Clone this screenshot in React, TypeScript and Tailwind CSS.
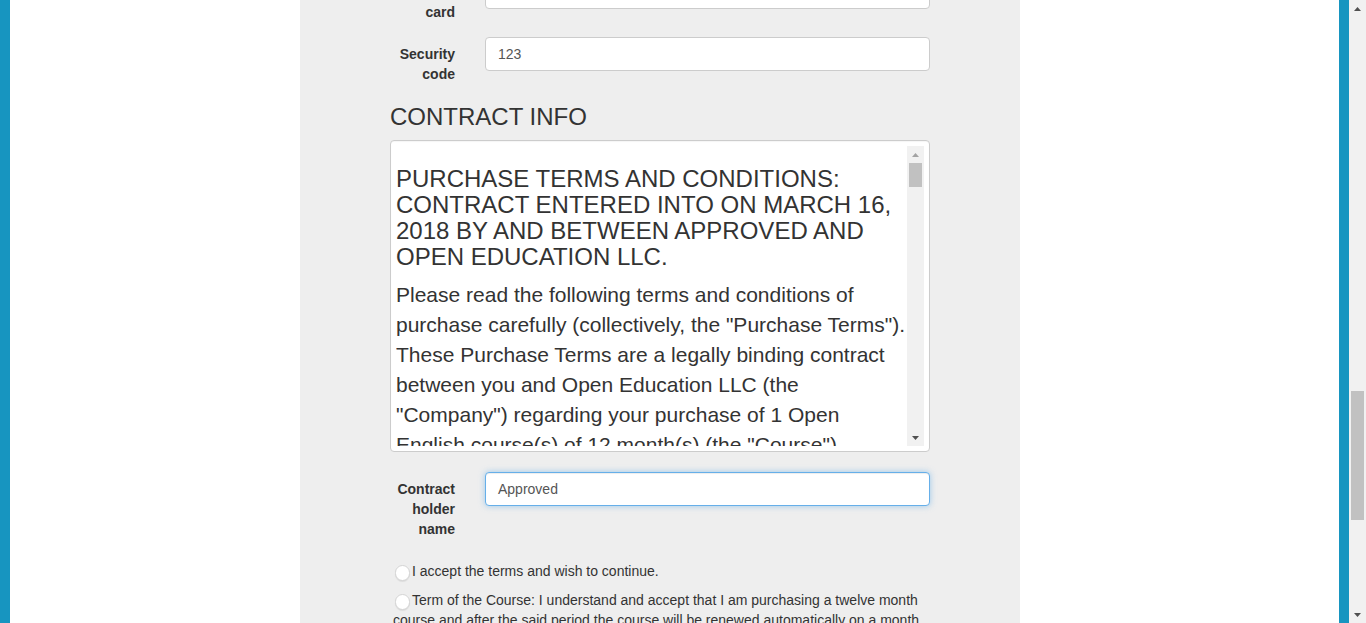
import React from "react";

const font = { fontFamily: '"Liberation Sans", Arial, Helvetica, sans-serif' };

function UpArrow({ color }: { color: string }) {
  return (
    <svg width="7" height="4" viewBox="0 0 7 4">
      <polygon points="0,4 7,4 3.5,0" fill={color} />
    </svg>
  );
}
function DownArrow({ color }: { color: string }) {
  return (
    <svg width="7" height="4" viewBox="0 0 7 4">
      <polygon points="0,0 7,0 3.5,4" fill={color} />
    </svg>
  );
}

function Label({ children }: { children: React.ReactNode }) {
  return (
    <div className="w-[65px] shrink-0 pt-[7px] text-right text-[14px] leading-[20px] font-bold text-[#333]">
      {children}
    </div>
  );
}

function Radio() {
  return (
    <span className="mr-[2px] ml-[2px] inline-block h-[16px] w-[15px] rounded-full border border-[#d4d4d4] bg-white align-[-5px] shadow-[0_1px_1px_rgba(0,0,0,0.08)]" />
  );
}

export default function App() {
  return (
    <div className="flex h-[623px] w-[1366px] overflow-hidden bg-white" style={font}>
      <div className="w-[10px] shrink-0 bg-[#1795c0]" />
      <div className="w-[290px] shrink-0 bg-white" />
      <div className="w-[720px] shrink-0 bg-[#eeeeee] pl-[90px]">
        <div className="w-[540px] -mt-[25px] flex flex-col">
          {/* Card group */}
          <div className="flex gap-[30px]">
            <Label>
              Name on
              <br />
              card
            </Label>
            <div className="flex-1">
              <div className="h-[34px] rounded-[4px] border border-[#cccccc] bg-white px-[12px] text-[14px] leading-[32px] text-[#555]">
                Approved
              </div>
            </div>
          </div>
          {/* Security code */}
          <div className="mt-[15px] flex gap-[30px]">
            <Label>
              Security
              <br />
              code
            </Label>
            <div className="flex-1">
              <div className="h-[34px] rounded-[4px] border border-[#cccccc] bg-white px-[12px] text-[14px] leading-[32px] text-[#555]">
                123
              </div>
            </div>
          </div>
          <h3 className="mt-[20px] text-[24px] leading-[26px] font-normal text-[#333]">CONTRACT INFO</h3>
          <div className="mt-[10px] h-[312px] rounded-[4px] border border-[#cccccc] bg-white p-[5px] shadow-[inset_0_1px_1px_rgba(0,0,0,0.04)]">
            <div className="flex h-[300px] overflow-hidden">
              <div className="flex-1 overflow-hidden text-[#333]">
                <h3 className="mt-[20px] mb-[10px] text-[24px] leading-[26px] font-normal">
                  PURCHASE TERMS AND CONDITIONS: CONTRACT ENTERED INTO ON MARCH 16, 2018 BY AND BETWEEN APPROVED AND OPEN EDUCATION LLC.
                </h3>
                <p className="text-[21px] leading-[30px]">
                  Please read the following terms and conditions of purchase carefully (collectively, the "Purchase Terms"). These Purchase Terms are a legally binding contract between you and Open Education LLC (the "Company") regarding your purchase of 1 Open English course(s) of 12 month(s) (the "Course").
                </p>
              </div>
              <div className="flex w-[17px] shrink-0 flex-col items-center bg-[#f1f1f1]">
                <div className="flex h-[17px] items-center justify-center">
                  <UpArrow color="#a3a3a3" />
                </div>
                <div className="h-[24px] w-[13px] bg-[#c1c1c1]" />
                <div className="flex-1" />
                <div className="flex h-[17px] items-center justify-center">
                  <DownArrow color="#505050" />
                </div>
              </div>
            </div>
          </div>
          {/* Contract holder */}
          <div className="mt-[20px] flex gap-[30px]">
            <Label>
              Contract
              <br />
              holder
              <br />
              name
            </Label>
            <div className="flex-1">
              <div className="h-[34px] rounded-[4px] border border-[#66afe9] bg-white px-[12px] text-[14px] leading-[32px] text-[#555] shadow-[inset_0_1px_1px_rgba(0,0,0,0.075),0_0_6px_rgba(102,175,233,0.6)]">
                Approved
              </div>
            </div>
          </div>
          <div className="mt-[22px] pl-[3px] text-[14px] leading-[20px] text-[#333]">
            <div>
              <Radio />I accept the terms and wish to continue.
            </div>
            <div className="mt-[9px]">
              <Radio />Term of the Course: I understand and accept that I am purchasing a twelve month course and after the said period the course will be renewed automatically on a month to month basis.
            </div>
          </div>
        </div>
      </div>
      <div className="flex-1 bg-white" />
      <div className="w-[10px] shrink-0 bg-[#1795c0]" />
      <div className="flex w-[17px] shrink-0 flex-col items-center bg-[#f1f1f1]">
        <div className="flex h-[17px] items-center justify-center">
          <UpArrow color="#505050" />
        </div>
        <div className="h-[374px]" />
        <div className="h-[129px] w-[13px] bg-[#c1c1c1]" />
        <div className="flex-1" />
        <div className="flex h-[17px] items-center justify-center">
          <DownArrow color="#505050" />
        </div>
      </div>
    </div>
  );
}
